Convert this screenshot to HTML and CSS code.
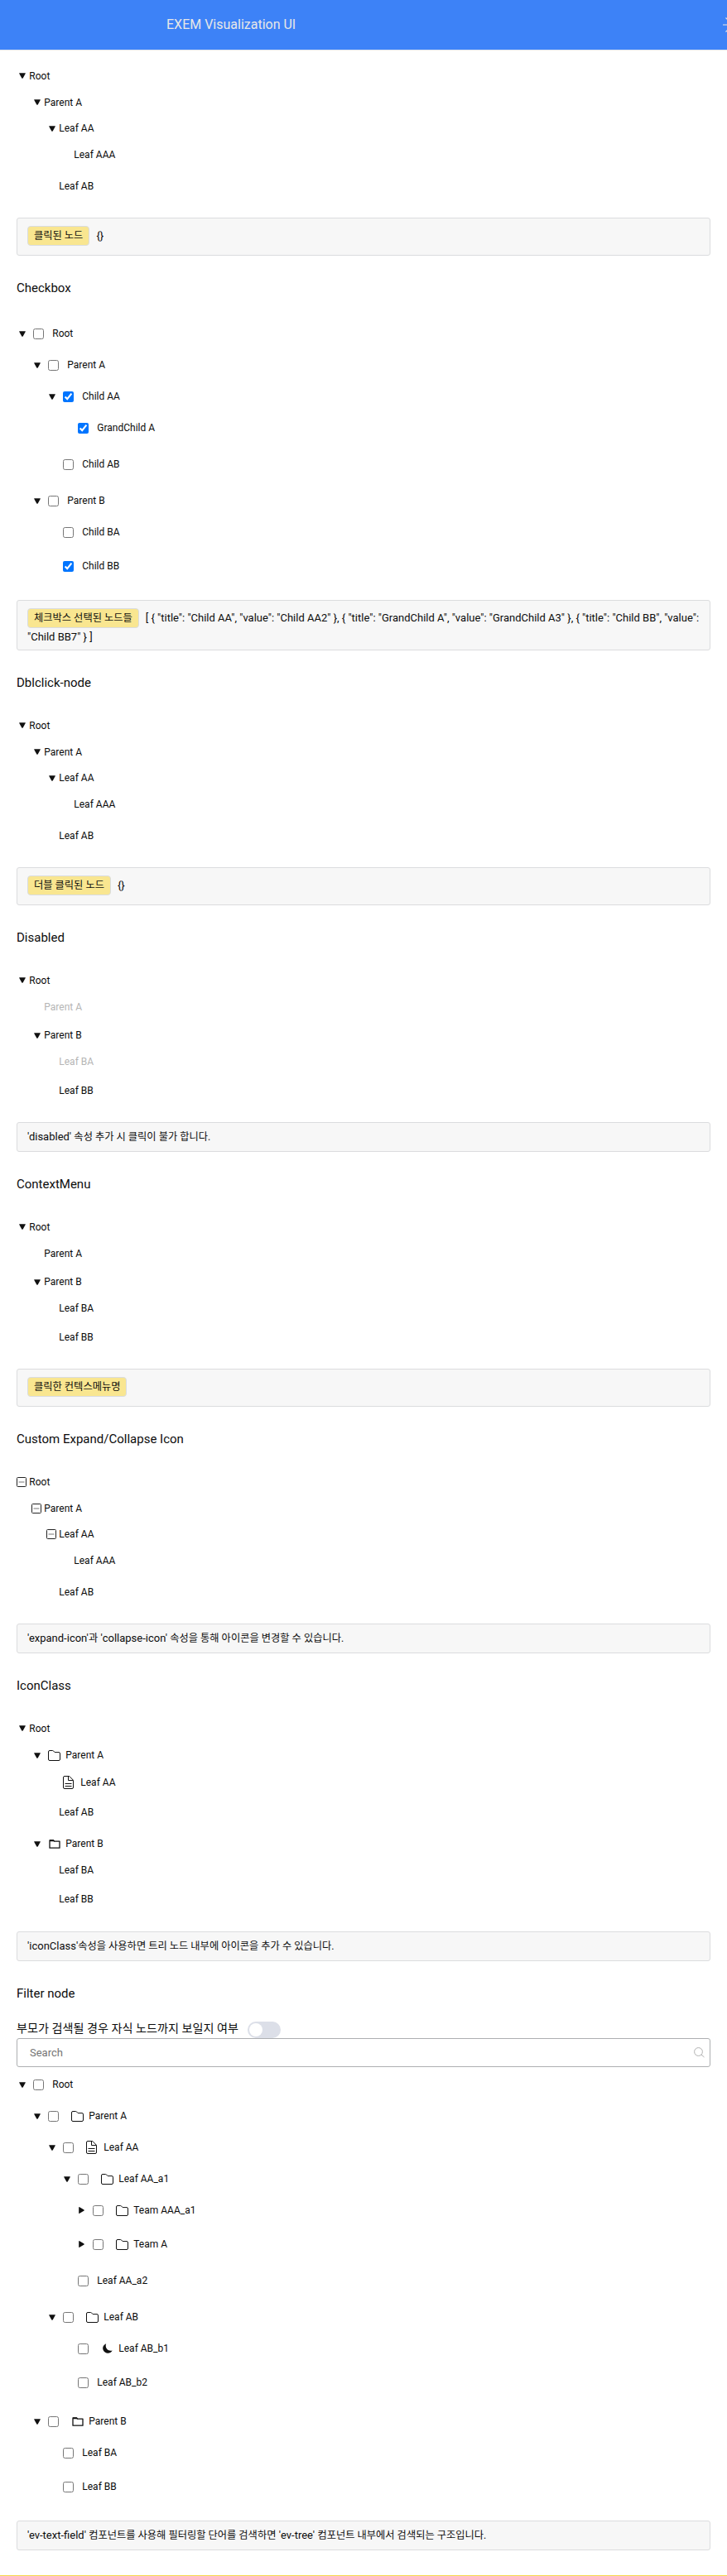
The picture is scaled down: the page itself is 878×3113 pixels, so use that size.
FILE: index.html
```html
<!DOCTYPE html>
<html lang="ko">
<head>
<meta charset="utf-8">
<title>EXEM Visualization UI</title>
<link rel="stylesheet" href="styles.css">
</head>
<body>
<svg class="defs" aria-hidden="true">
  <symbol id="down" viewBox="0 0 8 7"><path d="M.7.2h6.6q.9 0 .4.9L4.8 6.2q-.8 1.2-1.6 0L.3 1.1Q-.2.2.7.2z"/></symbol>
  <symbol id="right" viewBox="0 0 7 8"><path d="M.2.7v6.6q0 .9.9.4L6.2 4.8q1.2-.8 0-1.6L1.1.3Q.2-.2.2.7z"/></symbol>
  <symbol id="minus" viewBox="0 0 12 12"><rect x=".5" y=".5" width="11" height="11" rx="1" fill="none" stroke="#222"/><path d="M2.5 6h7" stroke="#777" fill="none"/></symbol>
  <symbol id="folder" viewBox="0 0 15 13"><path d="M2 .5h3.6q.5 0 .9.4l1.6 1.7h4.9q1.5 0 1.5 1.5V11q0 1.5-1.5 1.5H2Q.5 12.500.5 11V2Q.5.5 2 .5z" fill="none" stroke="#111"/></symbol>
  <symbol id="doc" viewBox="0 0 13 16"><path d="M2 .5h5.800L12.500 5.300V14q0 1.500-1.500 1.500H2Q.5 15.500.5 14V2Q.5.5 2 .5zM6.500.8v4.700h5.700M2.500 9.500h8M2.500 12.500h8" fill="none" stroke="#111"/></symbol>
  <symbol id="folder2" viewBox="0 0 14 11"><path d="M1 1h4.500l1 1.100H13V10.200H1z" fill="none" stroke="#111" stroke-width="1.300" stroke-linejoin="round"/><path d="M1 .5h5l1 1.700H1z" fill="#111"/></symbol>
  <symbol id="moon" viewBox="0 0 12 12"><path d="M4.200.2C.8 1.400-.8 5.200.8 8.300c2 4.200 8.300 4.700 10.900.2C6.300 9.800 2.300 5.300 4.200.2z" fill="#111"/></symbol>
</svg>

<header class="header">
  <h1 class="title">EXEM Visualization UI</h1>
  <svg class="sun" viewBox="0 0 24 24"><circle cx="12" cy="12" r="4"/><path d="M0 12h5M19 12h5M12 0v5M12 19v5M3.500 3.500l2.500 2.500M18 18l2.500 2.500M3.500 20.500l2.500-2.500M18 6l2.500-2.500"/></svg>
</header>

<main class="main">
  <section class="section">
    <ul class="tree">
      <li><div class="row"><i class="arrow"><svg><use href="#down"/></svg></i>Root</div>
        <ul>
          <li><div class="row"><i class="arrow"><svg><use href="#down"/></svg></i>Parent A</div>
            <ul>
              <li><div class="row"><i class="arrow"><svg><use href="#down"/></svg></i>Leaf AA</div>
                <ul><li><div class="row"><i class="arrow"></i>Leaf AAA</div></li></ul></li>
              <li><div class="row"><i class="arrow"></i>Leaf AB</div></li>
            </ul></li>
        </ul></li>
    </ul>
    <div class="desc tagged"><span class="tag"><span class="ko">클릭된 노드</span></span>{}</div>
  </section>

  <section class="section">
    <h2>Checkbox</h2>
    <ul class="tree checks">
      <li><div class="row"><i class="arrow"><svg><use href="#down"/></svg></i><input type="checkbox">Root</div>
        <ul>
          <li><div class="row"><i class="arrow"><svg><use href="#down"/></svg></i><input type="checkbox">Parent A</div>
            <ul>
              <li><div class="row"><i class="arrow"><svg><use href="#down"/></svg></i><input type="checkbox" checked>Child AA</div>
                <ul><li><div class="row"><i class="arrow"></i><input type="checkbox" checked>GrandChild A</div></li></ul></li>
              <li><div class="row"><i class="arrow"></i><input type="checkbox">Child AB</div></li>
            </ul></li>
          <li><div class="row"><i class="arrow"><svg><use href="#down"/></svg></i><input type="checkbox">Parent B</div>
            <ul>
              <li><div class="row"><i class="arrow"></i><input type="checkbox">Child BA</div></li>
              <li><div class="row"><i class="arrow"></i><input type="checkbox" checked>Child BB</div></li>
            </ul></li>
        </ul></li>
    </ul>
    <div class="desc tagged multiline"><span class="tag"><span class="ko">체크박스 선택된 노드들</span></span>[ { "title": "Child AA", "value": "Child AA2" }, { "title": "GrandChild A", "value": "GrandChild A3" }, { "title": "Child BB", "value": "Child BB7" } ]</div>
  </section>

  <section class="section">
    <h2>Dblclick-node</h2>
    <ul class="tree">
      <li><div class="row"><i class="arrow"><svg><use href="#down"/></svg></i>Root</div>
        <ul>
          <li><div class="row"><i class="arrow"><svg><use href="#down"/></svg></i>Parent A</div>
            <ul>
              <li><div class="row"><i class="arrow"><svg><use href="#down"/></svg></i>Leaf AA</div>
                <ul><li><div class="row"><i class="arrow"></i>Leaf AAA</div></li></ul></li>
              <li><div class="row"><i class="arrow"></i>Leaf AB</div></li>
            </ul></li>
        </ul></li>
    </ul>
    <div class="desc tagged"><span class="tag"><span class="ko">더블 클릭된 노드</span></span>{}</div>
  </section>

  <section class="section">
    <h2>Disabled</h2>
    <ul class="tree">
      <li><div class="row"><i class="arrow"><svg><use href="#down"/></svg></i>Root</div>
        <ul>
          <li><div class="row disabled"><i class="arrow"></i>Parent A</div></li>
          <li><div class="row"><i class="arrow"><svg><use href="#down"/></svg></i>Parent B</div>
            <ul>
              <li><div class="row disabled"><i class="arrow"></i>Leaf BA</div></li>
              <li><div class="row"><i class="arrow"></i>Leaf BB</div></li>
            </ul></li>
        </ul></li>
    </ul>
    <div class="desc">'disabled' <span class="ko">속성 추가 시 클릭이 불가 합니다.</span></div>
  </section>

  <section class="section">
    <h2>ContextMenu</h2>
    <ul class="tree">
      <li><div class="row"><i class="arrow"><svg><use href="#down"/></svg></i>Root</div>
        <ul>
          <li><div class="row"><i class="arrow"></i>Parent A</div></li>
          <li><div class="row"><i class="arrow"><svg><use href="#down"/></svg></i>Parent B</div>
            <ul>
              <li><div class="row"><i class="arrow"></i>Leaf BA</div></li>
              <li><div class="row"><i class="arrow"></i>Leaf BB</div></li>
            </ul></li>
        </ul></li>
    </ul>
    <div class="desc tagged"><span class="tag"><span class="ko">클릭한 컨텍스메뉴명</span></span></div>
  </section>

  <section class="section">
    <h2>Custom Expand/Collapse Icon</h2>
    <ul class="tree">
      <li><div class="row"><i class="arrow custom"><svg><use href="#minus"/></svg></i>Root</div>
        <ul>
          <li><div class="row"><i class="arrow custom"><svg><use href="#minus"/></svg></i>Parent A</div>
            <ul>
              <li><div class="row"><i class="arrow custom"><svg><use href="#minus"/></svg></i>Leaf AA</div>
                <ul><li><div class="row"><i class="arrow"></i>Leaf AAA</div></li></ul></li>
              <li><div class="row"><i class="arrow"></i>Leaf AB</div></li>
            </ul></li>
        </ul></li>
    </ul>
    <div class="desc">'expand-icon'<span class="ko">과</span> 'collapse-icon' <span class="ko">속성을 통해 아이콘을 변경할 수 있습니다.</span></div>
  </section>

  <section class="section">
    <h2>IconClass</h2>
    <ul class="tree icons">
      <li><div class="row"><i class="arrow"><svg><use href="#down"/></svg></i>Root</div>
        <ul>
          <li><div class="row with-folder"><i class="arrow"><svg><use href="#down"/></svg></i><i class="icon folder"><svg><use href="#folder"/></svg></i>Parent A</div>
            <ul>
              <li><div class="row with-doc"><i class="arrow"></i><i class="icon doc"><svg><use href="#doc"/></svg></i>Leaf AA</div></li>
              <li><div class="row"><i class="arrow"></i>Leaf AB</div></li>
            </ul></li>
          <li><div class="row with-folder"><i class="arrow"><svg><use href="#down"/></svg></i><i class="icon folder2"><svg><use href="#folder2"/></svg></i>Parent B</div>
            <ul>
              <li><div class="row"><i class="arrow"></i>Leaf BA</div></li>
              <li><div class="row"><i class="arrow"></i>Leaf BB</div></li>
            </ul></li>
        </ul></li>
    </ul>
    <div class="desc">'iconClass'<span class="ko">속성을 사용하면 트리 노드 내부에 아이콘을 추가 수 있습니다.</span></div>
  </section>

  <section class="section">
    <h2>Filter node</h2>
    <div class="option"><span class="ko">부모가 검색될 경우 자식 노드까지 보일지 여부</span><span class="switch"></span></div>
    <div class="search"><span>Search</span><svg viewBox="0 0 13 13"><circle cx="5.500" cy="5.500" r="4.900"/><path d="M9 9l3.500 3"/></svg></div>
    <ul class="tree checks filter">
      <li><div class="row"><i class="arrow"><svg><use href="#down"/></svg></i><input type="checkbox">Root</div>
        <ul>
          <li><div class="row"><i class="arrow"><svg><use href="#down"/></svg></i><input type="checkbox"><i class="icon folder"><svg><use href="#folder"/></svg></i>Parent A</div>
            <ul>
              <li><div class="row"><i class="arrow"><svg><use href="#down"/></svg></i><input type="checkbox"><i class="icon doc"><svg><use href="#doc"/></svg></i>Leaf AA</div>
                <ul>
                  <li><div class="row"><i class="arrow"><svg><use href="#down"/></svg></i><input type="checkbox"><i class="icon folder"><svg><use href="#folder"/></svg></i>Leaf AA_a1</div>
                    <ul>
                      <li><div class="row"><i class="arrow closed"><svg><use href="#right"/></svg></i><input type="checkbox"><i class="icon folder"><svg><use href="#folder"/></svg></i>Team AAA_a1</div></li>
                      <li><div class="row"><i class="arrow closed"><svg><use href="#right"/></svg></i><input type="checkbox"><i class="icon folder"><svg><use href="#folder"/></svg></i>Team A</div></li>
                    </ul></li>
                  <li><div class="row"><i class="arrow"></i><input type="checkbox">Leaf AA_a2</div></li>
                </ul></li>
              <li><div class="row"><i class="arrow"><svg><use href="#down"/></svg></i><input type="checkbox"><i class="icon folder"><svg><use href="#folder"/></svg></i>Leaf AB</div>
                <ul>
                  <li><div class="row"><i class="arrow"></i><input type="checkbox"><i class="icon moon"><svg><use href="#moon"/></svg></i>Leaf AB_b1</div></li>
                  <li><div class="row"><i class="arrow"></i><input type="checkbox">Leaf AB_b2</div></li>
                </ul></li>
            </ul></li>
          <li><div class="row"><i class="arrow"><svg><use href="#down"/></svg></i><input type="checkbox"><i class="icon folder2"><svg><use href="#folder2"/></svg></i>Parent B</div>
            <ul>
              <li><div class="row"><i class="arrow"></i><input type="checkbox">Leaf BA</div></li>
              <li><div class="row"><i class="arrow"></i><input type="checkbox">Leaf BB</div></li>
            </ul></li>
        </ul></li>
    </ul>
    <div class="desc">'ev-text-field' <span class="ko">컴포넌트를 사용해 필터링할 단어를 검색하면</span> 'ev-tree' <span class="ko">컴포넌트 내부에서 검색되는 구조입니다.</span></div>
  </section>
</main>
<div class="next-block"></div>
</body>
</html>
```
FILE: styles.css
```css
* { box-sizing: border-box; }
body {
  margin: 0;
  background: #fff;
  color: #0c0c0c;
  font-family: Roboto, "Noto Sans CJK KR", sans-serif;
  font-size: 13px;
  overflow-x: hidden;
}
ul { list-style: none; margin: 0; padding: 0; }
i { font-style: normal; }
svg { display: block; }
.defs { display: none; }
.ko { font-size: .943em; }

.header {
  display: flex;
  align-items: center;
  height: 61px;
  padding-left: 201px;
  background: #3d82f7;
  border-bottom: 1px solid #e3e5e8;
  overflow: hidden;
}
.title { flex: 0 0 672px; margin: 0; font-size: 16px; font-weight: 400; line-height: 20px; color: #e7e7e7; }
.sun { flex: none; width: 24px; height: 24px; fill: none; stroke: #e7e7e7; stroke-width: 1.2; margin-bottom: 1px; }

.main { padding: 15px 20px 0; }
h2 { margin: 0; height: 36px; font-size: 15px; font-weight: 400; line-height: 18px; }
.section { padding-bottom: 30px; }

.tree { height: 187px; font-size: 12px; }
.section h2 + .tree { padding-top: 9px; height: 196px; }
.tree ul { padding-left: 18px; }
.tree li { padding-bottom: 3px; }
.row { display: flex; align-items: center; height: 31.8px; line-height: 16px; color: #0a0a0a; }
.section h2 + .checks { height: 350px; }
.checks .row { height: 38px; }
.section h2 + .icons { height: 270px; }
.row.with-folder { height: 32.6px; }
.row.with-doc { height: 33.6px; }
.row.disabled { color: #b5b5b5; }
.tree.filter { height: 546px; margin-top: 2px; }

.arrow { flex: none; display: flex; width: 15.3px; padding-left: 2.7px; }
.arrow svg { width: 8px; height: 7px; fill: #111; }
.arrow.closed svg { width: 7px; height: 8px; }
.arrow.custom { padding-left: 0; }
.arrow.custom svg { width: 12px; height: 12px; }
.row input { flex: none; width: 13px; height: 13px; margin: 1px 10.3px 0 4.7px; }
.icon { flex: none; display: flex; width: 26px; padding-left: 5px; }
.folder svg { width: 15px; height: 13px; }
.doc svg { width: 13px; height: 16px; }
.folder2 { padding-left: 6px; }
.folder2 svg { width: 14px; height: 11px; }
.moon { padding-left: 7px; }
.moon svg { width: 12px; height: 12px; }

.desc {
  height: 36px;
  padding: 9px 8px 0 12px;
  border: 1px solid #dbdcde;
  border-radius: 3px;
  background: #f7f7f7;
  line-height: 16px;
}
.tagged { height: 46px; }
.multiline { height: 61px; line-height: 21px; }
.tag {
  display: inline-block;
  height: 24px;
  padding: 0 7px;
  margin-right: 8px;
  border: 1px solid #d9dce0;
  border-radius: 4px;
  background: #f9e690;
  line-height: 22px;
}

.option { display: flex; height: 27px; font-size: 15px; line-height: 30px; }
.switch { width: 40px; height: 20px; margin: 7px 0 0 11px; padding: 2px; border-radius: 10px; background: #dcdfe8; }
.switch::before { content: ""; display: block; width: 16px; height: 16px; border-radius: 50%; background: #fff; }
.search {
  display: flex;
  align-items: center;
  justify-content: space-between;
  height: 35px;
  padding: 0 6px 0 15px;
  border: 1px solid #adafb1;
  border-radius: 3px;
  color: #757575;
}
.search svg { width: 13px; height: 13px; fill: none; stroke: #b0b0b0; }

.next-block { height: 1px; background: #f5d94e; }
```
